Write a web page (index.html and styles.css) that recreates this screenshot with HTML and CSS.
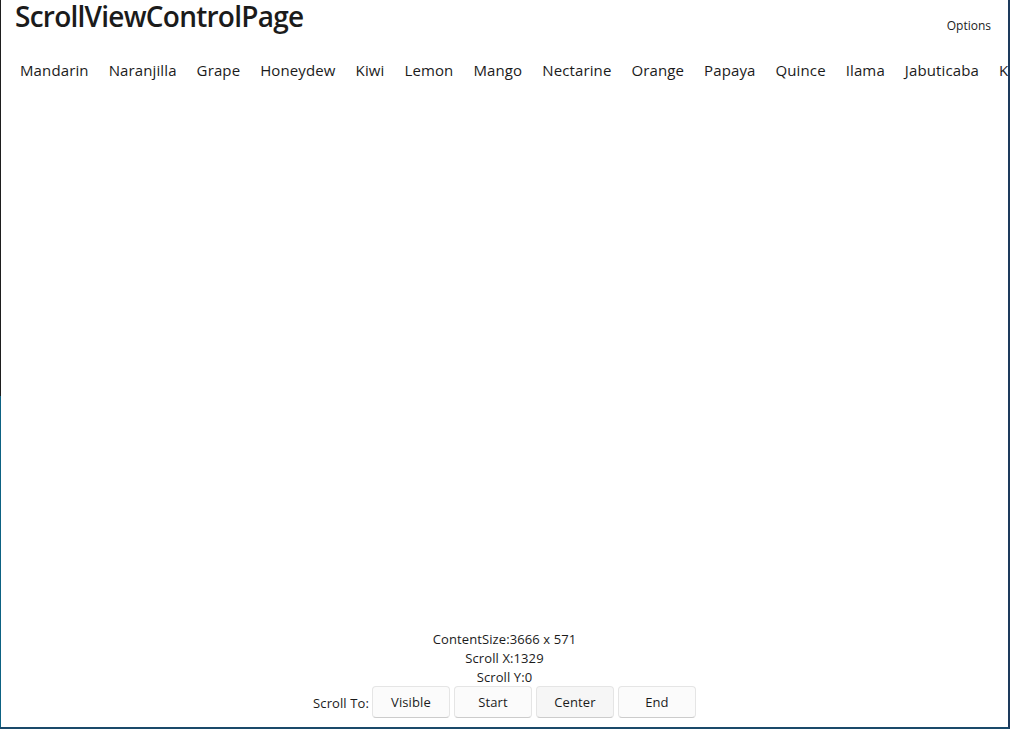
FILE: index.html
```html
<!DOCTYPE html>
<html>
<head>
<meta charset="utf-8">
<link rel="stylesheet" href="styles.css">
</head>
<body>
<div class="frame">
  <div class="app">
    <header class="top">
      <h1 class="title">ScrollViewControlPage</h1>
      <span class="options">Options</span>
    </header>
    <div class="scroller">
      <div class="items">
        <span>Mandarin</span><span>Naranjilla</span><span>Grape</span><span>Honeydew</span><span>Kiwi</span><span>Lemon</span><span>Mango</span><span>Nectarine</span><span>Orange</span><span>Papaya</span><span>Quince</span><span>Ilama</span><span>Jabuticaba</span><span>Kumquat</span><span>Lime</span>
      </div>
    </div>
    <div class="spacer"></div>
    <footer class="info">
      <div class="line">ContentSize:3666 x 571</div>
      <div class="line">Scroll X:1329</div>
      <div class="line">Scroll Y:0</div>
      <div class="controls">
        <span class="label">Scroll To:</span>
        <button class="btn">Visible</button>
        <button class="btn">Start</button>
        <button class="btn btn-hover">Center</button>
        <button class="btn">End</button>
      </div>
    </footer>
  </div>
</div>
</body>
</html>
```

FILE: styles.css
```css
html, body {
  margin: 0;
  padding: 0;
  height: 100%;
}
body {
  font-family: "Open Sans", "Noto Sans", sans-serif;
  color: #1b1b1b;
}
.frame {
  height: 729px;
  box-sizing: border-box;
  padding-left: 1px;
  border-right: 2px solid #1d3a5c;
  border-bottom: 2px solid #1a4a6a;
  background: linear-gradient(to bottom, #1e1e1e 0, #1e1e1e 396px, #0d6283 396px);
}
.app {
  height: 100%;
  background: #ffffff;
  display: flex;
  flex-direction: column;
  overflow: hidden;
}
.top {
  display: flex;
  justify-content: space-between;
  align-items: flex-start;
  padding: 0 17px 0 14px;
}
.title {
  margin: 0;
  font-size: 28px;
  font-weight: 600;
  line-height: 32px;
  letter-spacing: -0.75px;
}
.options {
  font-size: 12px;
  margin-top: 17px;
}
.scroller {
  overflow: hidden;
  margin-top: 26px;
  padding-left: 19px;
}
.items {
  display: flex;
  gap: 20px;
  white-space: nowrap;
  font-size: 15px;
  line-height: 20px;
  letter-spacing: 0.12px;
}
.spacer {
  flex: 1;
}
.info {
  display: flex;
  flex-direction: column;
  align-items: center;
  font-size: 13px;
  letter-spacing: 0.1px;
  padding-bottom: 9px;
}
.line {
  line-height: 19px;
}
.controls {
  display: flex;
  align-items: center;
  gap: 4px;
  margin-top: -1px;
}
.label {
  margin-right: -1px;
  padding-top: 2px;
}
.btn {
  width: 78px;
  height: 32px;
  font-family: inherit;
  font-size: 13px;
  letter-spacing: 0.1px;
  color: #1b1b1b;
  background: #fbfbfb;
  border: 1px solid #e5e5e5;
  border-bottom-color: #cccccc;
  border-radius: 4px;
  padding: 0;
}
.btn-hover {
  background: #f6f6f6;
}
```
